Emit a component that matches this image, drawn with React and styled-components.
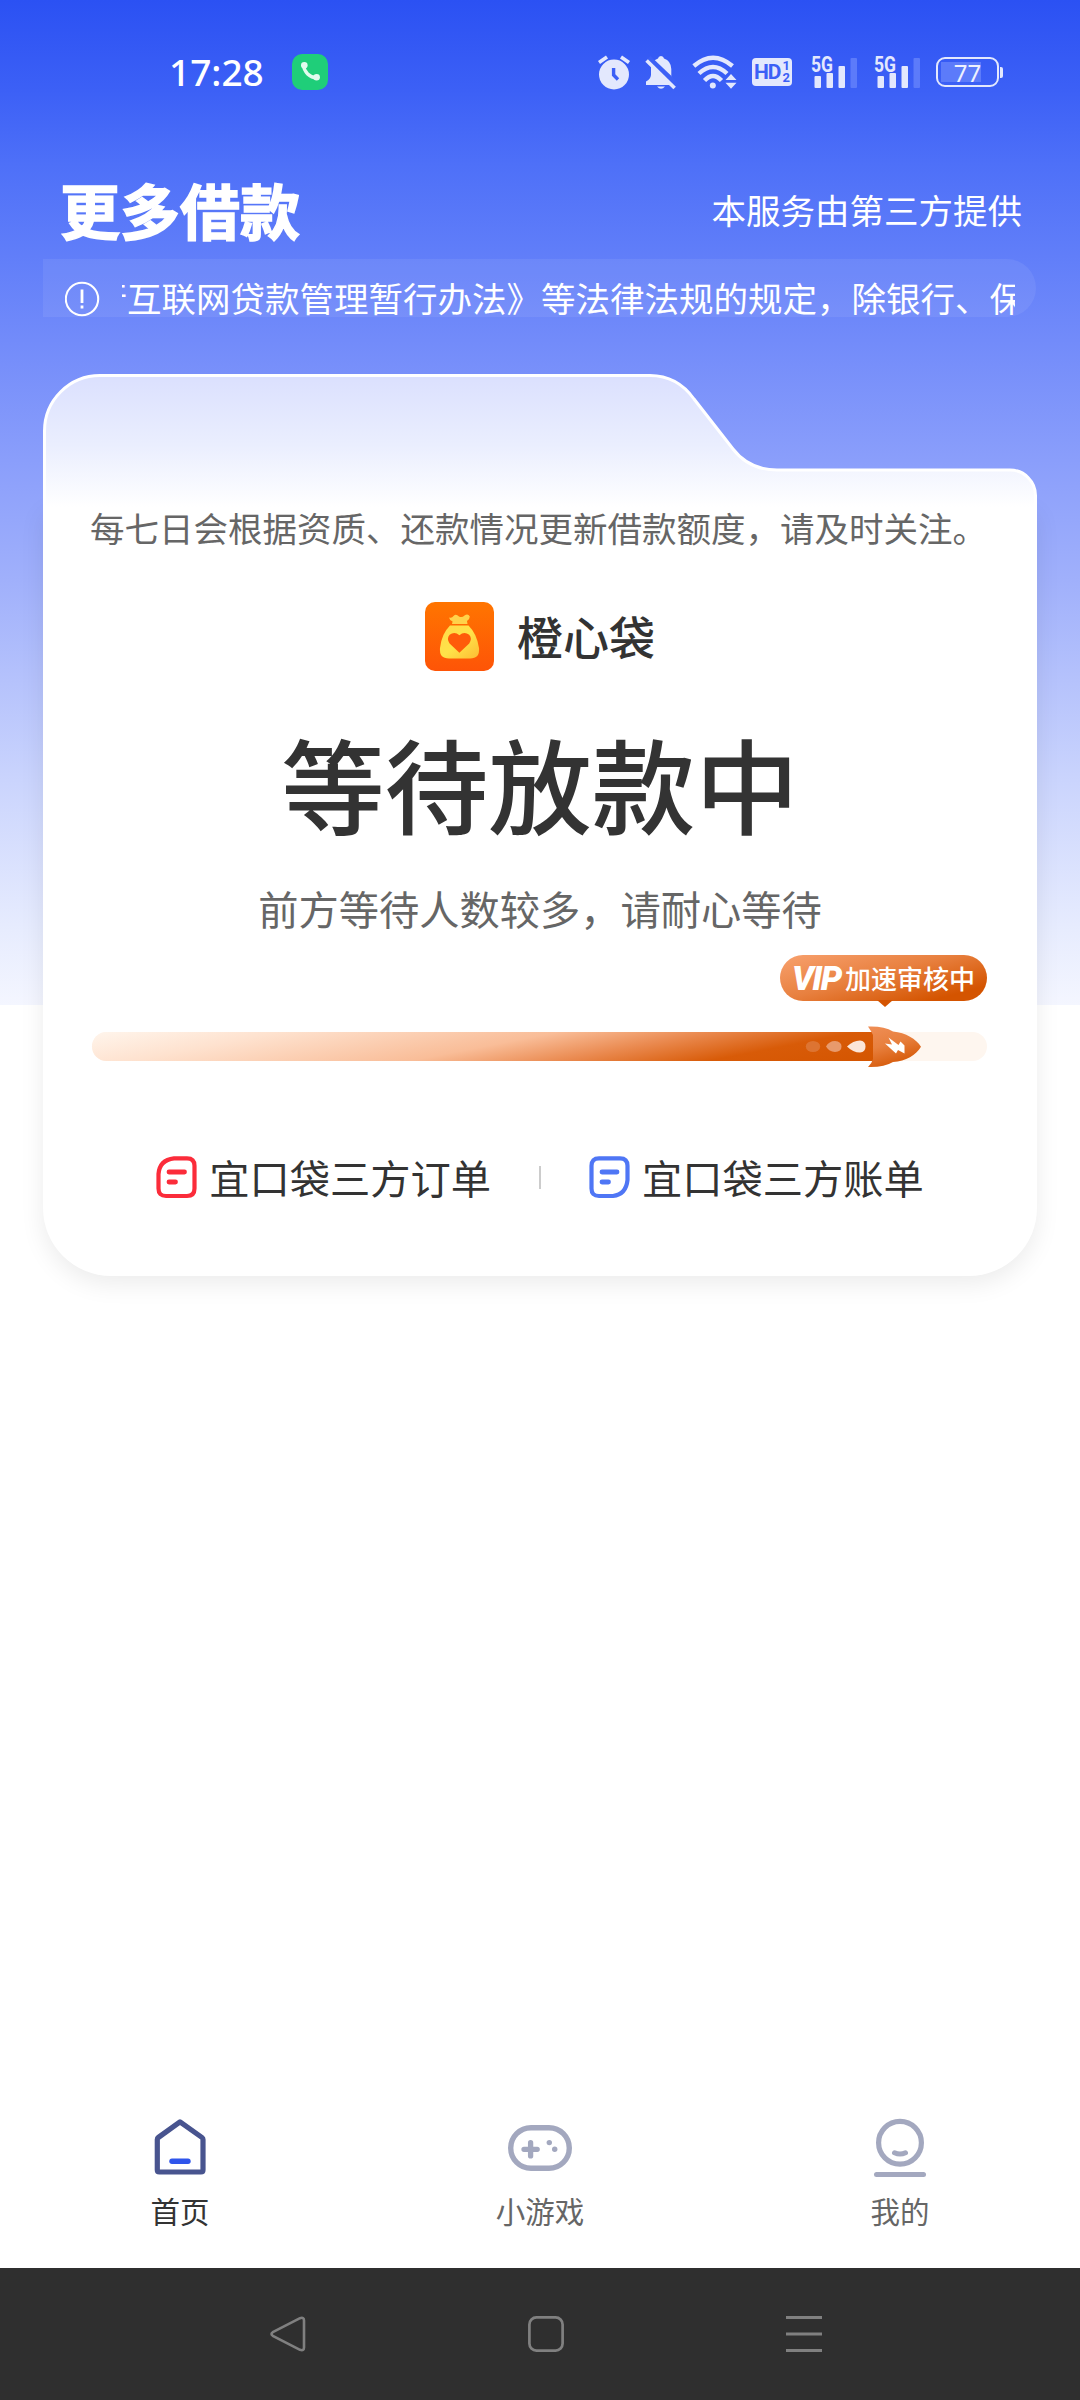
import React from 'react';
import styled, { createGlobalStyle } from 'styled-components';

const tabs = [
  { text: '首页', icon: <HomeIcon />, active: true },
  { text: '小游戏', icon: <GameIcon /> },
  { text: '我的', icon: <UserIcon /> },
];

export default function App() {
  return (
    <Page>
      <GlobalStyle />
      <StatusBar>
        <StatusGroup>
          <Time>17:28</Time>
          <CallBadge>
            <PhoneIcon />
          </CallBadge>
        </StatusGroup>
        <StatusIcons />
      </StatusBar>

      <Header>
        <Title>更多借款</Title>
        <Provider>本服务由第三方提供</Provider>
      </Header>

      <Notice>
        <NoticeIcon />
        <NoticeText>《商业银行互联网贷款管理暂行办法》等法律法规的规定，除银行、保险公司</NoticeText>
      </Notice>

      <Card>
        <CardTop />
        <CardBody>
          <Tip>每七日会根据资质、还款情况更新借款额度，请及时关注。</Tip>
          <Brand>
            <BagLogo />
            <BrandName>橙心袋</BrandName>
          </Brand>
          <State>等待放款中</State>
          <SubState>前方等待人数较多，请耐心等待</SubState>
          <Badge>
            <Vip>VIP</Vip>
            <BadgeText>加速审核中</BadgeText>
          </Badge>
          <Track>
            <Fill />
            <Rocket />
          </Track>
          <Links>
            <LinkItem>
              <OrderIcon />
              宜口袋三方订单
            </LinkItem>
            <Divider />
            <LinkItem>
              <BillIcon />
              宜口袋三方账单
            </LinkItem>
          </Links>
        </CardBody>
      </Card>

      <TabBar>
        {tabs.map(t => (
          <Tab key={t.text} $active={t.active}>
            {t.icon}
            <TabLabel>{t.text}</TabLabel>
          </Tab>
        ))}
      </TabBar>

      <SystemNav>
        <svg width="36" height="36" fill="none" stroke="#808080" strokeWidth="2.6">
          <path d="M2.8 16.2 L30 2.2 Q34 .8 34 4.4 V31.6 Q34 35.2 30 33.8 L2.8 19.8 Q.2 18 2.8 16.2Z" />
        </svg>
        <svg width="36" height="36" fill="none" stroke="#808080" strokeWidth="2.7">
          <rect x="1.4" y="1.4" width="33.2" height="33.2" rx="7" />
        </svg>
        <svg width="36" height="36" stroke="#808080" strokeWidth="3">
          <path d="M0 1.5H36M0 18H36M0 34.5H36" />
        </svg>
      </SystemNav>
    </Page>
  );
}

function PhoneIcon() {
  return (
    <svg width="36" height="36" viewBox="0 0 36 36">
      <path
        d="M11.5 11 C12 18 17.5 23.5 25 24"
        fill="none"
        stroke="#e2fbee"
        strokeWidth="3.4"
      />
      <circle cx="12.3" cy="11.3" r="3.3" fill="#e2fbee" />
      <circle cx="24.6" cy="23.2" r="3.3" fill="#e2fbee" />
    </svg>
  );
}

function Signal() {
  return (
    <svg width="48" height="36" viewBox="0 0 48 36" fill="#e3e8fd">
      <text
        x="0"
        y="17.5"
        textLength="22"
        lengthAdjust="spacingAndGlyphs"
        fontFamily="Roboto, sans-serif"
        fontWeight="700"
        fontSize="21.5"
      >
        5G
      </text>
      <rect x="3.5" y="22" width="6.5" height="12" rx="1" />
      <rect x="15.5" y="19" width="6.5" height="15" rx="1" />
      <rect x="27.5" y="12" width="6.5" height="22" rx="1" />
      <rect x="39.5" y="4" width="6.5" height="30" rx="1" fill="#5c7bfa" />
    </svg>
  );
}

function StatusIcons() {
  return (
    <Icons>
      <svg width="32" height="36" viewBox="0 0 32 36">
        <circle cx="16" cy="20.5" r="15" fill="#e3e8fd" />
        <path d="M1 8.5 L9 3 M31 8.5 L23 3" stroke="#e3e8fd" strokeWidth="3.6" />
        <path d="M15.6 14 V21 L20 25.5" fill="none" stroke="#3c60f6" strokeWidth="3.4" />
      </svg>
      <svg width="32" height="36" viewBox="0 0 32 36">
        <path
          d="M16 2 Q18.6 2 19 4.6 Q26 7 26.3 15 V22 Q27 25 31 27.6 V31 H1 V27.6 Q5.6 25 6 21 V14 Q6.4 7 13 4.6 Q13.4 2 16 2Z M12 32.5 H20 Q16 37 12 32.5Z"
          fill="#e3e8fd"
        />
        <path d="M3 4.5 L31 31" stroke="#3c60f6" strokeWidth="7" />
        <path d="M1.6 6.5 L29.6 34" stroke="#e3e8fd" strokeWidth="3.6" />
      </svg>
      <svg width="45" height="36" viewBox="0 0 45 36" fill="none" stroke="#e3e8fd" strokeWidth="4.4">
        <path d="M1.8 12 Q21 -4.500 40.500 12" />
        <path d="M7 19.500 Q21 6.500 35 19.500" />
        <path d="M12.500 26.500 Q21 17.500 29.500 26.500" />
        <circle cx="20.8" cy="31.500" r="3" fill="#e3e8fd" stroke="none" />
        <path d="M39 20 L44.500 26 H33.500Z M39 34.800 L44.500 28.800 H33.500Z" fill="#e3e8fd" stroke="none" />
      </svg>
      <HdBadge>
        <HdText>HD</HdText>
        <HdNums>
          <span>1</span>
          <span>2</span>
        </HdNums>
      </HdBadge>
      <Signal />
      <Signal />
      <Battery>77</Battery>
    </Icons>
  );
}

function NoticeIcon() {
  return (
    <svg width="35" height="40" viewBox="0 0 35 40" fill="none" stroke="#fff">
      <circle cx="17" cy="22" r="16.2" strokeWidth="2.1" />
      <path d="M17 12.5 V26" strokeWidth="2.8" />
      <path d="M17 28.5 V31.5" strokeWidth="2.8" />
    </svg>
  );
}

// folder-like top edge of the card
function CardTop() {
  return (
    <CardTopSvg width="994" height="133" viewBox="0 0 994 133">
      <defs>
        <linearGradient id="cardTop" x1="0" y1="0" x2="0" y2="1">
          <stop offset="0" stopColor="#dbe0fe" />
          <stop offset="0.5" stopColor="#eaeefe" />
          <stop offset="0.95" stopColor="#fff" />
        </linearGradient>
      </defs>
      <path
        d="M1.5 140 V57 A55.5 55.5 0 0 1 57 1.5 H607 C627 1.5 641 11 651 25 L690 75 C700 88 714 96 734 96 H967 A25.5 25.5 0 0 1 992.5 121.5 V140Z"
        fill="url(#cardTop)"
        stroke="#fff"
        strokeWidth="3"
      />
    </CardTopSvg>
  );
}

function BagLogo() {
  return (
    <svg width="69" height="69" viewBox="0 0 69 69">
      <defs>
        <linearGradient id="logoBg" x1="0" y1="0" x2="0" y2="1">
          <stop offset="0" stopColor="#ff7500" />
          <stop offset="1" stopColor="#fe5407" />
        </linearGradient>
        <linearGradient id="bag" x1="0" y1="0" x2="1" y2="1">
          <stop offset="0" stopColor="#ffd94a" />
          <stop offset="0.5" stopColor="#ffe349" />
          <stop offset="1" stopColor="#fdbb33" />
        </linearGradient>
      </defs>
      <rect width="69" height="69" rx="10" fill="url(#logoBg)" />
      <path
        d="M24 15.5 Q27 16.5 28.5 14 Q31 11.5 34 14.5 Q37 16 39.5 13.5 Q43 11 44.8 14.6 Q44.6 18 42 19 L42.5 22 H27 L27.6 19.5 Q24.6 18.5 24 15.5Z"
        fill="#ffd24a"
      />
      <path
        d="M25 23.5 H43.5 Q52 32 54 46 Q55 56.5 45 56.5 H24 Q14 56.5 15 46 Q16.5 32 25 23.5Z"
        fill="url(#bag)"
      />
      <path
        d="M34.4 50.800 L24.6 41.5 Q21.3 36.5 24.6 32.8 Q29.5 28.800 34.4 33.2 Q39.3 28.800 44.2 32.8 Q47.5 36.5 44.2 41.5Z"
        fill="#ff5b0a"
      />
    </svg>
  );
}

function Rocket() {
  return (
    <RocketSvg width="120" height="43" viewBox="0 0 120 43">
      <defs>
        <linearGradient id="rocket" x1="0" y1="0" x2="0.4" y2="1">
          <stop offset="0" stopColor="#ef8e56" />
          <stop offset="0.5" stopColor="#e8803f" />
          <stop offset="1" stopColor="#d65a09" />
        </linearGradient>
      </defs>
      <ellipse cx="12" cy="20.5" rx="7.2" ry="5.6" fill="#dd7432" />
      <path d="M25 20.5 Q28 15 34 15 Q40.500 15.5 40.500 20.5 Q40.500 25.5 34 26 Q28 25.5 25 20.5Z" fill="#e89a6c" />
      <path d="M46 20.5 Q52 14.5 59 14.5 Q64.5 15 64.5 20.5 Q64.5 26 59 26.5 Q52 26.5 46 20.5Z" fill="#fbe5d8" />
      <path
        d="M67 .6 Q83 0 92 5.6 C105 7 115 13 120 20.8 C115 29 105 35.5 92 36 Q83 41.5 67 41 Q71 37 72 33 V9 Q70 5 67 .6Z"
        fill="url(#rocket)"
      />
      <path d="M84 17.5 L91 18.5 L87.5 11.5 L97.500 19 L99.5 15.5 L103.5 19.5 V27.5 L97 24 L95 27.5Z" fill="#fff" />
    </RocketSvg>
  );
}

function OrderIcon() {
  return (
    <svg width="41" height="43" viewBox="0 0 41 43" fill="none" stroke="#fb2c3a" strokeLinecap="round">
      <path
        d="M18 2.3 H31 Q38.5 2.3 38.5 9.8 V32.5 Q38.5 40 31 40 H10 Q2.5 40 2.5 32.5 V18 Q3.5 4 18 2.3Z"
        strokeWidth="4.2"
      />
      <path d="M13 16 H28.500 M13 26 H19.500" strokeWidth="4.8" />
    </svg>
  );
}

function BillIcon() {
  return (
    <svg width="41" height="43" viewBox="0 0 41 43" fill="none" stroke="#4f76f5" strokeLinecap="round">
      <path
        d="M10 2.3 H31 Q38.5 2.3 38.5 9.8 V24 Q37 38.5 24 40 H10 Q2.5 40 2.5 32.5 V9.8 Q2.5 2.3 10 2.3Z"
        strokeWidth="4.2"
      />
      <path d="M13 16 H28 M13 26 H19.500" strokeWidth="4.8" />
    </svg>
  );
}

function HomeIcon() {
  return (
    <svg width="72" height="60" viewBox="0 0 72 60" fill="none" strokeLinecap="round" strokeLinejoin="round">
      <path
        d="M36 3.800 L58 19.500 Q59 20.200 59 21.500 V52 Q59 54 57 54 H15.300 Q13.300 54 13.300 52 V21.500 Q13.300 20.200 14.300 19.500Z"
        stroke="#48548f"
        strokeWidth="5.2"
      />
      <path d="M28 43.300 H44" stroke="#2f55eb" strokeWidth="5.4" />
    </svg>
  );
}

function GameIcon() {
  return (
    <svg width="72" height="60" viewBox="0 0 72 60" fill="none" stroke="#a3a8bf" strokeLinecap="round">
      <rect x="6.7" y="9.7" width="58.6" height="40.6" rx="20.3" strokeWidth="5.4" />
      <path d="M20 31.3 H33.2 M26.6 24.7 V37.9" strokeWidth="5.3" />
      <circle cx="45.3" cy="24.6" r="2.7" fill="#a3a8bf" stroke="none" />
      <circle cx="50.7" cy="31.3" r="2.7" fill="#a3a8bf" stroke="none" />
    </svg>
  );
}

function UserIcon() {
  return (
    <svg width="72" height="60" viewBox="0 0 72 60" fill="none" stroke="#a3a8bf" strokeLinecap="round">
      <circle cx="36" cy="24.8" r="21.4" strokeWidth="5.2" />
      <path d="M30.5 34.8 Q36 37.4 41.5 34.8" strokeWidth="5" />
      <path d="M12.5 56.5 H59.5" strokeWidth="5" />
    </svg>
  );
}

const GlobalStyle = createGlobalStyle`
  * {
    box-sizing: border-box;
  }
  body {
    margin: 0;
    background: #fff;
  }
  svg {
    display: block;
    flex-shrink: 0;
  }
`;

const Page = styled.div`
  display: flex;
  flex-direction: column;
  width: 1080px;
  height: 2400px;
  font-family: 'Noto Sans CJK SC', sans-serif;
  background: linear-gradient(
      180deg,
      #2b51f3 0,
      #3c60f6 90px,
      #4e70f8 165px,
      #728bfa 340px,
      #8a9efb 460px,
      #a0b0fb 580px,
      #cad4fd 780px,
      #e7ecfe 930px,
      #f4f6ff 1005px
    )
    top / 100% 1005px no-repeat #fff;
`;

const StatusBar = styled.div`
  display: flex;
  align-items: center;
  justify-content: space-between;
  height: 144px;
  padding: 0 81px 0 169px;
`;

const StatusGroup = styled.div`
  display: flex;
  align-items: center;
`;

const Time = styled.span`
  width: 123px;
  color: #fff;
  font-family: 'Noto Sans', sans-serif;
  font-size: 37px;
  font-weight: 500;
  line-height: 40px;
`;

const CallBadge = styled.div`
  width: 36px;
  height: 36px;
  border-radius: 10px;
  background: #1fce79;
`;

const Icons = styled.div`
  display: flex;
  align-items: center;
  gap: 15px;
`;

const HdBadge = styled.div`
  display: flex;
  align-items: center;
  justify-content: center;
  width: 40px;
  height: 28px;
  margin-right: 4px;
  border-radius: 4px;
  background: #e3e8fd;
  color: #3c60f6;
  font-family: 'Liberation Sans Narrow', Roboto, sans-serif;
  font-weight: 700;
`;

const HdText = styled.span`
  font-size: 21px;
  letter-spacing: -1px;
`;

const HdNums = styled.span`
  display: flex;
  flex-direction: column;
  margin-left: 2px;
  font-size: 13px;
  line-height: 12px;
`;

const Battery = styled.div`
  position: relative;
  width: 63px;
  height: 30px;
  margin-left: -1px;
  border: 2px solid #e3e8fd;
  border-radius: 9px;
  background: linear-gradient(#5c7bfa, #5c7bfa) 3px 3px / 40px 20px no-repeat;
  color: #eef1fe;
  font-family: 'Noto Sans', sans-serif;
  font-size: 24px;
  line-height: 27px;
  text-align: center;
  &::after {
    content: '';
    position: absolute;
    top: 8px;
    right: -6px;
    width: 3px;
    height: 11px;
    border-radius: 0 2px 2px 0;
    background: #e3e8fd;
  }
`;

const Header = styled.header`
  display: flex;
  align-items: center;
  justify-content: space-between;
  height: 115px;
  padding: 14px 58px 0 60px;
  color: #fff;
`;

const Title = styled.h1`
  margin: 0;
  font-size: 60px;
  font-weight: 700;
  line-height: 80px;
  -webkit-text-stroke: 1.5px #fff;
  stroke-linejoin: round;
`;

const Provider = styled.span`
  font-size: 34.5px;
  line-height: 42px;
`;

const Notice = styled.div`
  display: flex;
  height: 58px;
  margin: 0 44px 0 43px;
  padding: 18px 21px 0 22px;
  border-radius: 0 30px 30px 0;
  background: rgba(255, 255, 255, 0.07);
`;

const NoticeText = styled.div`
  flex: 1;
  overflow: hidden;
  margin-left: 21.5px;
  color: #fff;
  font-size: 34.5px;
  line-height: 40px;
  text-indent: -167px;
  white-space: nowrap;
`;

const Card = styled.section`
  margin: 57px 43px 0;
`;

const CardTopSvg = styled.svg`
  position: relative;
  z-index: 1;
  margin-bottom: -1px;
`;

const CardBody = styled.div`
  display: flex;
  flex-direction: column;
  align-items: center;
  height: 770px;
  padding: 0 49px;
  border-radius: 0 0 68px 68px;
  background: #fff;
  box-shadow: 0 8px 24px rgba(0, 0, 0, 0.08);
`;

const Tip = styled.p`
  position: relative;
  z-index: 2;
  margin: 0 3px 0 0;
  color: #666;
  font-size: 34.5px;
  line-height: 42px;
  white-space: nowrap;
`;

const Brand = styled.div`
  display: flex;
  align-items: center;
  gap: 23px;
  margin-top: 54px;
`;

const BrandName = styled.span`
  color: #333;
  font-size: 46px;
  font-weight: 500;
  line-height: 67px;
  padding-bottom: 2px;
`;

const State = styled.h2`
  margin: 49px 0 0;
  color: #333;
  font-size: 103.5px;
  font-weight: 500;
  line-height: 124px;
`;

const SubState = styled.p`
  margin: 40px 0 0;
  color: #666;
  font-size: 40.25px;
  line-height: 48px;
`;

const Badge = styled.div`
  position: relative;
  display: flex;
  align-items: center;
  align-self: flex-end;
  width: 207px;
  height: 46px;
  margin: 23px 1px 0 0;
  padding-left: 12px;
  border-radius: 23px;
  background: linear-gradient(165deg, #f8a16e 0%, #e8803f 45%, #d45400 85%);
  color: #fff;
  &::after {
    content: '';
    position: absolute;
    top: 45px;
    left: 97px;
    border: 8px solid transparent;
    border-top: 7px solid #d45400;
    border-bottom: 0;
  }
`;

const Vip = styled.span`
  width: 53px;
  font-family: Roboto, sans-serif;
  font-size: 34px;
  font-style: italic;
  font-weight: 900;
  letter-spacing: -1.5px;
  line-height: 46px;
`;

const BadgeText = styled.span`
  font-size: 26px;
  font-weight: 500;
  line-height: 44px;
`;

const Track = styled.div`
  position: relative;
  width: 895px;
  height: 29px;
  margin: 31px 2px 0 0;
  border-radius: 15px;
  background: #fef6ef;
`;

const Fill = styled.div`
  width: 785px;
  height: 29px;
  border-radius: 15px 0 0 15px;
  background: linear-gradient(
    169deg,
    #fff5ec 0%,
    #fee2cf 20%,
    #f9bd98 50%,
    #ea8a50 66%,
    #d85b08 82%,
    #d45500 100%
  );
`;

const RocketSvg = styled.svg`
  position: absolute;
  top: -6px;
  left: 709px;
`;

const Links = styled.div`
  display: flex;
  align-items: center;
  gap: 48px;
  margin-top: 92px;
`;

const LinkItem = styled.a`
  display: flex;
  align-items: center;
  gap: 12px;
  color: #333;
  font-size: 40.25px;
  line-height: 48px;
  white-space: nowrap;
`;

const Divider = styled.i`
  width: 2px;
  height: 23px;
  background: #ccc;
`;

const TabBar = styled.nav`
  display: flex;
  margin-top: auto;
  padding-bottom: 40px;
`;

const Tab = styled.div`
  display: flex;
  flex: 1;
  flex-direction: column;
  align-items: center;
  color: ${p => (p.$active ? '#333' : '#666')};
`;

const TabLabel = styled.span`
  margin-top: 14px;
  font-size: 29.5px;
  line-height: 36px;
`;

const SystemNav = styled.div`
  display: flex;
  align-items: center;
  justify-content: center;
  gap: 222px;
  height: 132px;
  padding-left: 12px;
  background: #2f2f2f;
`;
